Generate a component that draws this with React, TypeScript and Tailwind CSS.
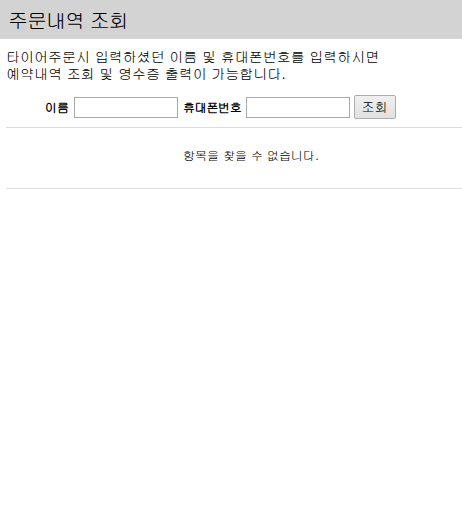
const App = () => {
    return (
        <div className="w-[462px] h-[522px] bg-white text-black font-['Gulim','Noto_Sans_CJK_KR',sans-serif]">
            <div className="h-[39px] bg-[#d3d3d3] pl-[8px] flex items-center">
                <h1 className="text-[20px] leading-none tracking-[-1px]">주문내역 조회</h1>
            </div>
            <div className="pt-[9px] pl-[6px] text-[14px] leading-[17px]">
                <p>타이어주문시 입력하셨던 이름 및 휴대폰번호를 입력하시면</p>
                <p>예약내역 조회 및 영수증 출력이 가능합니다.</p>
            </div>
            <div className="mt-[13px] pl-[45px] flex items-center h-[24px] text-[12px]">
                <label className="font-bold mr-[5px]" htmlFor="name">이름</label>
                <input
                    id="name"
                    type="text"
                    className="w-[104px] h-[21px] border border-[#a9a9a9] bg-white mr-[5px]"
                    autoComplete="off"
                />
                <label className="font-bold mr-[4px] tracking-[-0.3px]" htmlFor="phone">휴대폰번호</label>
                <input
                    id="phone"
                    type="text"
                    className="w-[104px] h-[21px] border border-[#a9a9a9] bg-white mr-[4px]"
                    autoComplete="off"
                />
                <button className="w-[42px] h-[24px] border border-[#acacac] rounded-[2px] bg-gradient-to-b from-[#f0f0f0] to-[#e1e1e1] text-[13px]">
                    조회
                </button>
            </div>
            <div className="ml-[6px] mt-[8px] border-t border-[#dddddd] h-[61px] pt-[18px]">
                <p className="ml-[177px] text-[12px] leading-[18px]">항목을 찾을 수 없습니다.</p>
            </div>
            <div className="ml-[6px] border-t border-[#dddddd]" />
        </div>
    );
};

export default App;
